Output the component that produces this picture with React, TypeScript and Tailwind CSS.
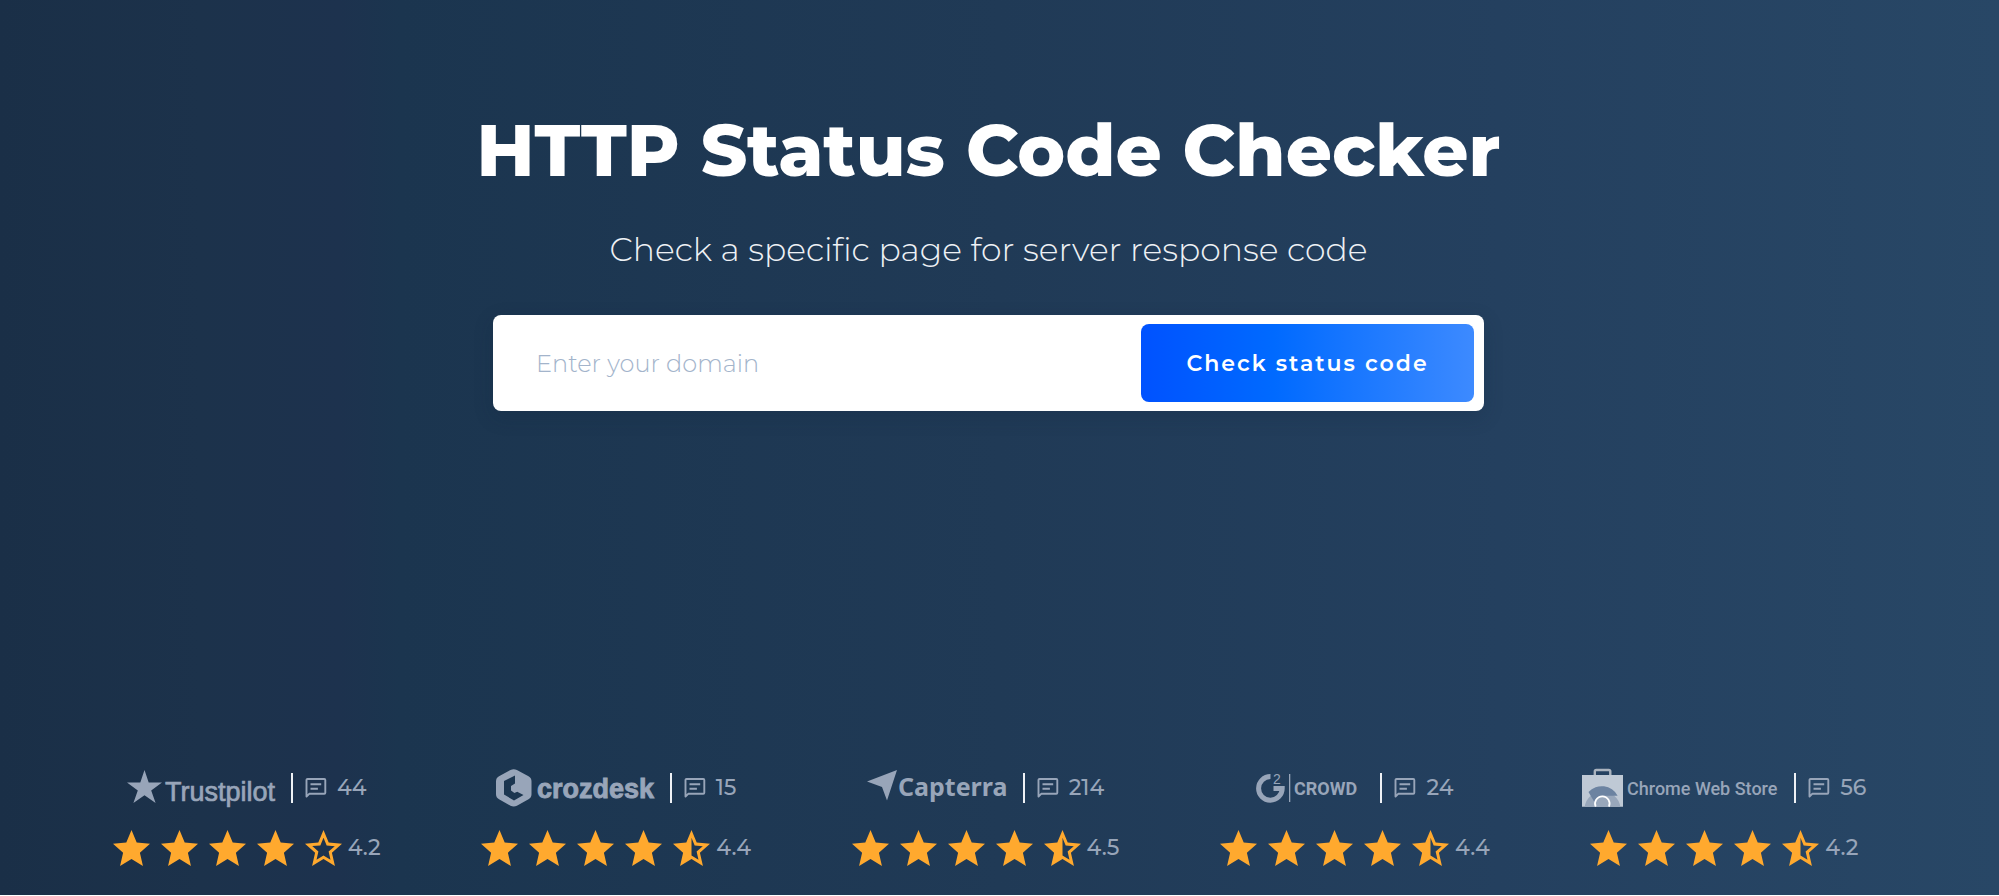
import React from 'react';

type StarKind = 'full' | 'half' | 'empty';

interface Review {
  id: string;
  logo: React.ReactNode;
  logoGap: string;
  count: number;
  rating: string;
  lastStar: StarKind;
}

const STAR_PATHS: Record<StarKind, string> = {
  full: 'M12 17.27 18.18 21l-1.64-7.03L22 9.24l-7.19-.61L12 2 9.19 8.63 2 9.24l5.46 4.73L5.82 21z',
  half: 'M22 9.24l-7.19-.62L12 2 9.19 8.63 2 9.24l5.46 4.73L5.82 21 12 17.27 18.18 21l-1.63-7.03L22 9.24zM12 15.4V6.1l1.71 4.04 4.38.38-3.32 2.88 1 4.28L12 15.4z',
  empty:
    'M22 9.24l-7.19-.62L12 2 9.19 8.63 2 9.24l5.46 4.73L5.82 21 12 17.27 18.18 21l-1.63-7.03L22 9.24zM12 15.4l-3.76 2.27 1-4.28-3.32-2.88 4.38-.38L12 6.1l1.71 4.04 4.38.38-3.32 2.88 1 4.28L12 15.4z',
};

const Star: React.FC<{ kind: StarKind }> = ({ kind }) => (
  <svg viewBox="2 2 20 19" className="h-9 w-[37px] fill-[#ffa92e]" preserveAspectRatio="none" aria-hidden="true">
    <path d={STAR_PATHS[kind]} />
  </svg>
);

const CommentIcon: React.FC = () => (
  <svg viewBox="0 0 22 20" className="h-5 w-[22px]" fill="none" stroke="#98a5b9" strokeWidth="1.9" aria-hidden="true">
    <path d="M1.5 18.5V2a1 1 0 0 1 1-1h16.8a1 1 0 0 1 1 1v12.8a1 1 0 0 1-1 1H4.2z" strokeLinejoin="round" />
    <path d="M5.5 6.3h10.7M5.5 10.8h7.4" />
  </svg>
);

const TrustpilotLogo: React.FC = () => (
  <svg viewBox="0 0 151 40" className="h-10 w-[151px] fill-[#98a5b9]" role="img" aria-label="Trustpilot">
    <path d="M17.5 2l4.2 12.6H35L24.2 22.4 28.6 35 17.5 27.2 6.4 35l4.4-12.6L0 14.6h13.3z" />
    <text x="38" y="33" className="font-['Liberation_Sans',sans-serif] text-[27px]" stroke="#98a5b9" strokeWidth="0.7">
      Trustpilot
    </text>
  </svg>
);

const CrozdeskLogo: React.FC = () => (
  <svg viewBox="0 0 161 40" className="h-10 w-[161px] fill-[#98a5b9]" role="img" aria-label="crozdesk">
    <path
      fillRule="evenodd"
      d="M14.5 2q3.2-1.6 6.4 0l11.6 6.2q3 1.7 3 5v13q0 3.3-3 5l-11.6 6.6q-3.2 1.6-6.4 0L3 31.2q-3-1.7-3-5v-13q0-3.3 3-5zM19 7.5 8 13v13.500l10 6 9.500-5.500-6.300-3.300-2.800 1.300-3.400-2.600v-4.500l4-2.500z"
    />
    <text x="41" y="30" className="font-['Liberation_Sans',sans-serif] text-[27px] font-bold" stroke="#98a5b9" strokeWidth="0.9">
      crozdesk
    </text>
  </svg>
);

const CapterraLogo: React.FC = () => (
  <svg viewBox="0 0 140 40" className="h-10 w-[140px] fill-[#98a5b9]" role="img" aria-label="Capterra">
    <path d="M0 13.500 30 2 20 32.500 15 19z" />
    <text x="31" y="28" className="font-['Noto_Sans',sans-serif] text-[25px] font-bold">
      Capterra
    </text>
  </svg>
);

const G2CrowdLogo: React.FC = () => (
  <svg viewBox="0 0 104 40" className="h-10 w-[104px] fill-[#98a5b9]" role="img" aria-label="G2 Crowd">
    <path d="M14.500 8.600A11.800 11.800 0 1 0 26.200 20.500H17.500" fill="none" stroke="#98a5b9" strokeWidth="5" />
    <text x="17" y="16" className="font-['Liberation_Sans',sans-serif] text-[14px]">
      2
    </text>
    <rect x="33" y="6" width="1.3" height="28" />
    <text x="38" y="27" className="font-['Roboto',sans-serif] text-[18px] font-bold">
      CROWD
    </text>
  </svg>
);

const ChromeStoreLogo: React.FC = () => (
  <svg viewBox="0 0 199 40" className="h-10 w-[199px] fill-[#98a5b9]" role="img" aria-label="Chrome Web Store">
    <path d="M12.800 7V3.500q0-1.500 1.500-1.500h12.500q1.500 0 1.500 1.500V7" fill="none" stroke="#aab3be" strokeWidth="2.4" />
    <path d="M0 7h41v31.700H0z" fill="#bfc9d5" />
    <path d="M2.700 38.700A18 18 0 0 1 38.300 38.700z" fill="#98a7bb" />
    <path d="M6.500 24A18 18 0 0 1 35.600 27.700H20.300a8 8 0 0 0-7 8z" fill="#6c83a1" />
    <path d="M12.600 38.700a8 8 0 1 1 15.400 0z" fill="#98a7bb" />
    <path d="M13.700 38.700a7.300 7.300 0 1 1 13.200 0" fill="none" stroke="#fff" strokeWidth="1.7" />
    <text x="45" y="27" className="font-['Roboto',sans-serif] text-[18px] font-medium">
      Chrome Web Store
    </text>
  </svg>
);

const reviews: Review[] = [
  { id: 'trustpilot', logo: <TrustpilotLogo />, logoGap: 'gap-[13px]', count: 44, rating: '4.2', lastStar: 'empty' },
  { id: 'crozdesk', logo: <CrozdeskLogo />, logoGap: 'gap-[13px]', count: 15, rating: '4.4', lastStar: 'half' },
  { id: 'capterra', logo: <CapterraLogo />, logoGap: 'gap-4', count: 214, rating: '4.5', lastStar: 'half' },
  { id: 'g2crowd', logo: <G2CrowdLogo />, logoGap: 'gap-5', count: 24, rating: '4.4', lastStar: 'half' },
  { id: 'chrome', logo: <ChromeStoreLogo />, logoGap: 'gap-[13px]', count: 56, rating: '4.2', lastStar: 'half' },
];

const ReviewCard: React.FC<{ review: Review }> = ({ review }) => (
  <li className="flex flex-col items-center gap-[22px]">
    <div className={`flex items-center ${review.logoGap}`}>
      {review.logo}
      <div className="flex items-center gap-3">
        <span className="h-[30px] w-0.5 bg-[#eef1f5]" />
        <div className="flex items-center gap-2.5">
          <CommentIcon />
          <span className="text-[22px] leading-[38px] font-medium">{review.count}</span>
        </div>
      </div>
    </div>
    <div className="flex items-center gap-1.5">
      <div className="flex gap-[11px]">
        {[0, 1, 2, 3].map((i) => (
          <Star key={i} kind="full" />
        ))}
        <Star kind={review.lastStar} />
      </div>
      <span className="text-[22px] leading-9 font-medium">{review.rating}</span>
    </div>
  </li>
);

const App: React.FC = () => {
  return (
    <div className="min-h-screen bg-white pb-px font-['Montserrat','Inter',sans-serif]">
      <main className="flex min-h-[calc(100vh-1px)] flex-col justify-between bg-[linear-gradient(90deg,#1a2f47_0%,#1c324b_10%,#1d324e_17%,#1b354f_20%,#203a56_50%,#24405f_75%,#284766_100%)]">
        <section className="flex flex-col items-center pt-[106px] pr-[22px]">
          <h1 className="text-[72px] leading-[88px] font-extrabold text-white">HTTP Status Code Checker</h1>
          <p className="mt-[33px] text-[33px] leading-[44px] font-light text-[#eef1f5]">
            Check a specific page for server response code
          </p>
          <form
            className="mt-11 flex h-24 w-full max-w-[991px] items-center rounded-lg bg-white py-[9px] pr-[10px] pl-2 shadow-[0_6px_20px_rgba(16,36,60,0.2)]"
            onSubmit={(e) => e.preventDefault()}
          >
            <input
              type="text"
              aria-label="Enter your domain"
              placeholder="Enter your domain"
              className="h-full min-w-0 flex-1 bg-transparent pl-[35px] text-[24px] font-light text-[#1b314c] outline-none placeholder:text-[#a3b4cb]"
            />
            <button
              type="submit"
              className="h-full w-[333px] rounded-lg bg-[linear-gradient(90deg,#0052ff_0%,#006aff_40%,#3d8aff_100%)] text-[22px] font-semibold tracking-[2px] text-white"
            >
              Check status code
            </button>
          </form>
        </section>

        <ul className="grid grid-cols-5 pr-[90px] pb-[29px] pl-[62px] text-[#98a5b9]">
          {reviews.map((review) => (
            <ReviewCard key={review.id} review={review} />
          ))}
        </ul>
      </main>
    </div>
  );
};

export default App;
